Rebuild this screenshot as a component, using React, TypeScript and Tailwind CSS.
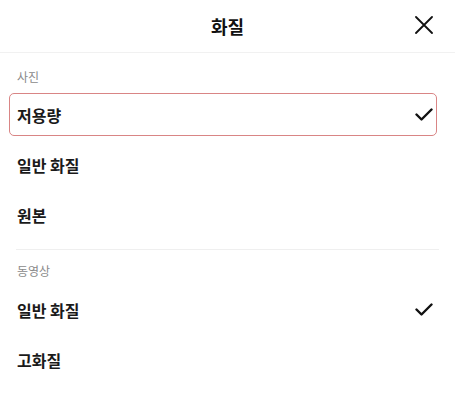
import React from "react";

const font = { fontFamily: '"Noto Sans CJK KR", "Noto Sans", sans-serif' };

function Check() {
  return (
    <svg width="18" height="14" viewBox="0 0 18 14" fill="none">
      <path
        d="M1.5 6.5 L6.5 11.5 L16.5 1.5"
        stroke="#111"
        strokeWidth="2.4"
        strokeLinecap="round"
        strokeLinejoin="round"
      />
    </svg>
  );
}

function CloseIcon() {
  return (
    <svg width="18" height="18" viewBox="0 0 18 18" fill="none">
      <path d="M1 1 L17 17 M17 1 L1 17" stroke="#111" strokeWidth="1.8" strokeLinecap="round" />
    </svg>
  );
}

type Item = { label: string; checked?: boolean; selected?: boolean };

function Row({ item }: { item: Item }) {
  return (
    <div
      className={`ml-[9px] mr-[18px] h-[43px] flex items-center justify-between pl-[7px] pr-[3px] rounded-[5px] border ${
        item.selected ? "border-[#d98585]" : "border-transparent"
      }`}
    >
      <span className="text-[16px] font-semibold text-[#1a1a1a] leading-none">{item.label}</span>
      {item.checked && <Check />}
    </div>
  );
}

export default function App() {
  const photo: Item[] = [
    { label: "저용량", checked: true, selected: true },
    { label: "일반 화질" },
    { label: "원본" },
  ];
  const video: Item[] = [{ label: "일반 화질", checked: true }, { label: "고화질" }];

  return (
    <div className="w-[455px] h-[400px] bg-white overflow-hidden" style={font}>
      {/* Header */}
      <div className="relative h-[53px] flex items-center justify-center border-b border-[#f1f1f1]">
        <span className="text-[18px] font-bold text-[#111] leading-none">화질</span>
        <button className="absolute left-[415px] top-[16px]">
          <CloseIcon />
        </button>
      </div>

      {/* 사진 */}
      <div className="pt-[13px]">
        <div className="h-[22px] flex items-center pl-[17px] text-[12px] text-[#8a8a8a]">사진</div>
        <div className="mt-[5px] flex flex-col gap-[7px]">
          {photo.map((it) => (
            <Row key={it.label} item={it} />
          ))}
        </div>
      </div>

      <div className="ml-[16px] mr-[16px] mt-[13px] h-px bg-[#efefef]" />

      {/* 동영상 */}
      <div className="pt-[10px]">
        <div className="h-[22px] flex items-center pl-[17px] text-[12px] text-[#8a8a8a]">동영상</div>
        <div className="mt-[6px] flex flex-col gap-[7px]">
          {video.map((it) => (
            <Row key={it.label} item={it} />
          ))}
        </div>
      </div>
    </div>
  );
}
